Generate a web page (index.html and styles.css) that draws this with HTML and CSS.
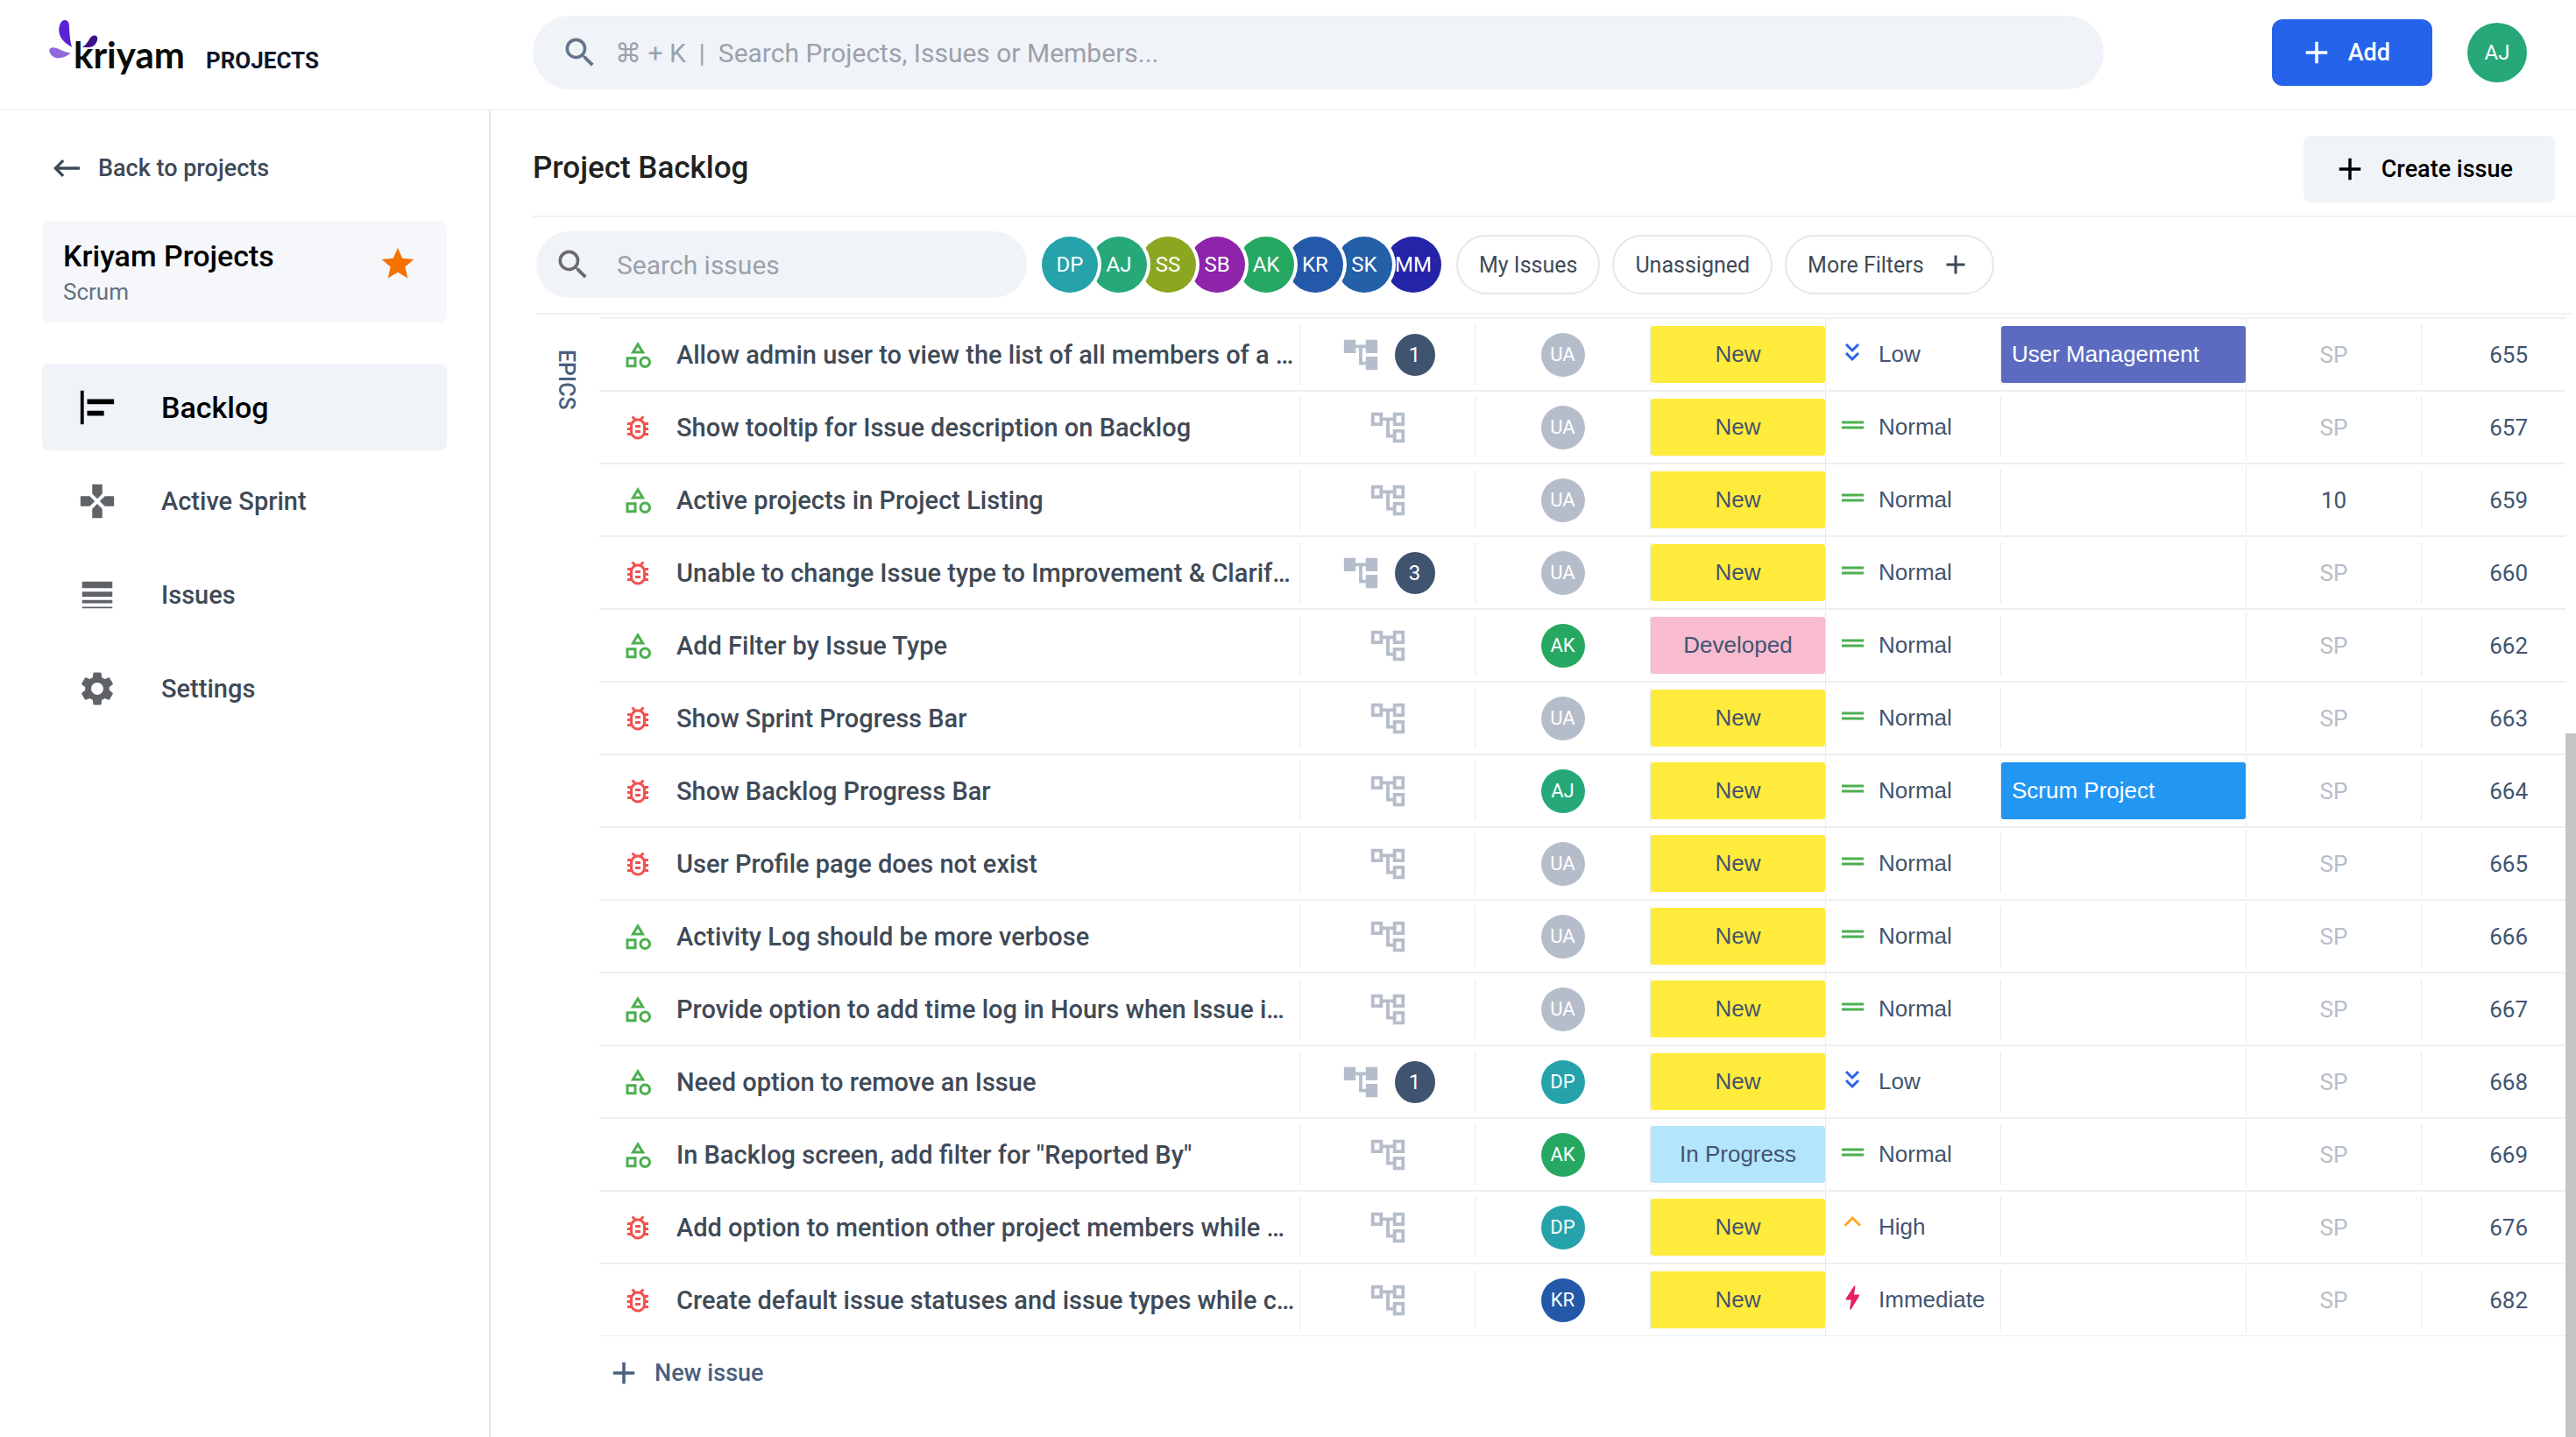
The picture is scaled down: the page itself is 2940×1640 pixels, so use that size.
FILE: index.html
```html
<!DOCTYPE html>
<html lang="en">
<head>
<meta charset="utf-8">
<meta name="viewport" content="width=device-width, initial-scale=1">
<title>Project Backlog - Kriyam Projects</title>
<link rel="stylesheet" href="styles.css">
</head>
<body>
<svg class="sprite" aria-hidden="true">
  <symbol id="search" viewBox="0 0 24 24"><path d="M15.5 14h-.79l-.28-.27A6.47 6.47 0 0 0 16 9.5 6.5 6.5 0 1 0 9.500 16c1.610 0 3.090-.59 4.230-1.570l.27.28v.79l5 4.990L20.490 19l-4.990-5zm-6 0C7.010 14 5 11.990 5 9.500S7.010 5 9.500 5 14 7.010 14 9.500 11.990 14 9.500 14z"/></symbol>
  <symbol id="plus" viewBox="0 0 24 24"><path d="M19 13h-6v6h-2v-6H5v-2h6V5h2v6h6v2z"/></symbol>
  <symbol id="back" viewBox="0 0 24 24"><path d="M21 11H6.830l3.580-3.590L9 6l-6 6 6 6 1.410-1.410L6.830 13H21z"/></symbol>
  <symbol id="star" viewBox="0 0 24 24"><path d="M12 17.270 18.180 21l-1.640-7.030L22 9.240l-7.190-.61L12 2 9.190 8.630 2 9.240l5.460 4.730L5.820 21z"/></symbol>
  <symbol id="backlog" viewBox="0 0 24 24"><path d="M4 22H2V2h2v20zM22 7H6v3h16V7zm-6 7H6v3h10v-3z"/></symbol>
  <symbol id="sprint" viewBox="0 0 24 24"><path d="M15 7.500V2H9v5.500l3 3 3-3zM7.500 9H2v6h5.500l3-3-3-3zM9 16.500V22h6v-5.500l-3-3-3 3zM16.500 9l-3 3 3 3H22V9h-5.500z"/></symbol>
  <symbol id="issues" viewBox="0 0 24 24"><path d="M3 17h18v-2H3v2zm0 3h18v-1H3v1zm0-7h18v-3H3v3zm0-9v4h18V4H3z"/></symbol>
  <symbol id="settings" viewBox="0 0 24 24"><path d="M19.140 12.940c.04-.3.06-.61.06-.94 0-.32-.02-.64-.07-.94l2.030-1.580c.18-.14.23-.41.12-.61l-1.920-3.320c-.12-.22-.37-.29-.59-.22l-2.390.96c-.5-.38-1.030-.7-1.620-.94l-.36-2.540c-.04-.24-.24-.41-.48-.41h-3.840c-.24 0-.43.17-.47.41l-.36 2.540c-.59.24-1.130.57-1.620.94l-2.390-.96c-.22-.08-.47 0-.59.22L2.740 8.870c-.12.21-.08.47.12.61l2.030 1.580c-.05.3-.09.63-.09.94s.02.64.07.94l-2.030 1.580c-.18.14-.23.41-.12.61l1.920 3.320c.12.22.37.29.59.22l2.390-.96c.5.38 1.030.7 1.620.94l.36 2.540c.05.24.24.41.48.41h3.840c.24 0 .44-.17.47-.41l.36-2.540c.59-.24 1.130-.56 1.620-.94l2.390.96c.22.08.47 0 .59-.22l1.920-3.320c.12-.22.07-.47-.12-.61l-2.010-1.580zM12 15.600c-1.980 0-3.600-1.620-3.600-3.600s1.620-3.600 3.600-3.600 3.600 1.620 3.600 3.600-1.620 3.600-3.600 3.600z"/></symbol>
  <symbol id="story" viewBox="0 0 24 24"><path d="m12 2-5.500 9h11L12 2zm0 3.840L13.930 9h-3.870L12 5.840zM17.500 13c-2.490 0-4.500 2.010-4.500 4.500s2.010 4.500 4.500 4.500 4.500-2.010 4.500-4.500-2.010-4.500-4.500-4.500zm0 7c-1.380 0-2.500-1.120-2.500-2.500s1.120-2.500 2.500-2.500 2.500 1.120 2.500 2.500-1.120 2.500-2.500 2.500zM3 21.500h8v-8H3v8zm2-6h4v4H5v-4z"/></symbol>
  <symbol id="bug" viewBox="0 0 24 24"><path d="M20 8h-2.810c-.45-.78-1.070-1.450-1.820-1.960L17 4.410 15.590 3l-2.170 2.170C12.960 5.060 12.490 5 12 5s-.96.06-1.410.17L8.410 3 7 4.410l1.620 1.630C7.880 6.550 7.260 7.220 6.810 8H4v2h2.090c-.05.33-.09.66-.09 1v1H4v2h2v1c0 .34.04.67.09 1H4v2h2.810c1.040 1.790 2.970 3 5.190 3s4.150-1.210 5.190-3H20v-2h-2.090c.05-.33.09-.66.09-1v-1h2v-2h-2v-1c0-.34-.04-.67-.09-1H20V8zm-4 4v3c0 .22-.03.47-.07.7l-.1.65-.37.65c-.72 1.240-2.040 2-3.460 2s-2.740-.77-3.460-2l-.37-.64-.1-.65C8.030 15.480 8 15.230 8 15v-4c0-.23.03-.48.07-.7l.1-.65.37-.65c.3-.52.72-.97 1.210-1.310l.57-.39.74-.18c.31-.08.63-.12.94-.12.32 0 .63.04.95.12l.68.16.61.42c.5.34.91.78 1.210 1.310l.38.65.1.65c.04.22.07.47.07.69v1zm-6 2h4v2h-4v-2zm0-4h4v2h-4v-2z"/></symbol>
  <symbol id="tree" viewBox="0 0 24 24"><path d="M22 11V3h-7v3H9V3H2v8h7V8h2v10h4v3h7v-8h-7v3h-2V8h2v3h7zM7 9H4V5h3v4zm10 6h3v4h-3v-4zm0-10h3v4h-3V5z"/></symbol>
  <symbol id="tree-filled" viewBox="0 0 24 24"><path d="M22 11V3h-7v3H9V3H2v8h7V8h2v10h4v3h7v-8h-7v3h-2V8h2v3h7z"/></symbol>
  <symbol id="low" viewBox="0 0 36 36"><path d="m11 9 7 7 7-7M11 19l7 7 7-7" fill="none" stroke="#2563eb" stroke-width="3"/></symbol>
  <symbol id="normal" viewBox="0 0 36 36"><path d="M6 13.500h25v3H6zM6 19.500h25v3H6z" fill="#4caf50"/></symbol>
  <symbol id="high" viewBox="0 0 36 36"><path d="m9.500 18.800 8.800-8.800 8.800 8.800" fill="none" stroke="#ffa726" stroke-width="3"/></symbol>
  <symbol id="immediate" viewBox="0 0 36 36"><path d="m19.800 5 1.800-.7L20 14.600h6V16l-9.500 15.500H15l1.700-11h-6V19z" fill="#e91e63"/></symbol>
</svg>

<header class="topbar">
  <div class="brand">
    <div class="logo">
      <svg class="leaves" viewBox="0 0 58 46" aria-hidden="true">
        <path fill="#5b21d6" d="M26.300 31.700C24 26 23.500 18 22.800 6 22.500 2 20 1 17.500 1c-3.500 0-6 5-6.200 11 0 8 4.700 14.500 15 19.700z"/>
        <path fill="#9168dc" d="M24.700 38.500C17 38 12 33 5 32.300 1.500 32 0 34 .3 36c.7 5 5.700 8.500 10.700 8.300 6-.3 10-2.800 13.700-5.800z"/>
        <path fill="#3b128c" d="M37.500 32c5.500-2.500 7-8 10.500-12 2-2 6-2.500 7 .5 1 4.500-2.500 9.500-6 10.800-4 1.200-8 .7-11.500.7z"/>
      </svg>
      <span class="wordmark">kriyam</span>
    </div>
    <span class="product">PROJECTS</span>
  </div>
  <label class="search search-global">
    <svg class="icon-md"><use href="#search"/></svg>
    <input type="text" aria-label="Search" placeholder="⌘ + K  |  Search Projects, Issues or Members...">
  </label>
  <div class="account">
    <button class="btn btn-primary" type="button"><svg class="icon-plus"><use href="#plus"/></svg>Add</button>
    <button class="avatar avatar-lg c-aj" type="button">AJ</button>
  </div>
</header>

<div class="layout">
  <aside class="sidebar">
    <a class="back" href="#"><svg class="icon-back"><use href="#back"/></svg>Back to projects</a>
    <div class="project">
      <div>
        <div class="project-name">Kriyam Projects</div>
        <div class="project-kind">Scrum</div>
      </div>
      <svg class="icon-md star"><use href="#star"/></svg>
    </div>
    <nav class="nav">
      <a class="nav-item active" href="#"><svg class="icon-lg"><use href="#backlog"/></svg>Backlog</a>
      <a class="nav-item" href="#"><svg class="icon-lg"><use href="#sprint"/></svg>Active Sprint</a>
      <a class="nav-item" href="#"><svg class="icon-lg"><use href="#issues"/></svg>Issues</a>
      <a class="nav-item" href="#"><svg class="icon-lg"><use href="#settings"/></svg>Settings</a>
    </nav>
  </aside>

  <main class="main">
    <div class="page-head">
      <h1>Project Backlog</h1>
      <button class="btn btn-soft" type="button"><svg class="icon-plus"><use href="#plus"/></svg>Create issue</button>
    </div>
    <div class="filters">
      <label class="search search-issues">
        <svg class="icon-md"><use href="#search"/></svg>
        <input type="text" aria-label="Search issues" placeholder="Search issues">
      </label>
      <div class="members">
        <button class="avatar c-dp" type="button">DP</button>
        <button class="avatar c-aj" type="button">AJ</button>
        <button class="avatar c-ss" type="button">SS</button>
        <button class="avatar c-sb" type="button">SB</button>
        <button class="avatar c-ak" type="button">AK</button>
        <button class="avatar c-kr" type="button">KR</button>
        <button class="avatar c-sk" type="button">SK</button>
        <button class="avatar c-mm" type="button">MM</button>
      </div>
      <div class="chips">
        <button class="chip" type="button">My Issues</button>
        <button class="chip" type="button">Unassigned</button>
        <button class="chip" type="button">More Filters<svg class="icon-sm"><use href="#plus"/></svg></button>
      </div>
    </div>

    <div class="board">
      <div class="epics">EPICS</div>
      <div class="list">
        <table class="issues">
          <colgroup><col><col class="w-200"><col class="w-200"><col class="w-200"><col class="w-200"><col class="w-280"><col class="w-200"><col class="w-id"></colgroup>
          <tbody>
            <tr>
              <td><div class="cell title"><svg class="icon-sm story"><use href="#story"/></svg><a href="#">Allow admin user to view the list of all members of a …</a></div></td>
              <td><div class="cell center tree"><svg class="icon-lg"><use href="#tree-filled"/></svg><span class="count">1</span></div></td>
              <td><div class="cell center"><span class="avatar avatar-sm c-ua">UA</span></div></td>
              <td><div class="cell full"><span class="tag s-new">New</span></div></td>
              <td><div class="cell priority"><svg class="icon-sm"><use href="#low"/></svg>Low</div></td>
              <td><div class="cell full"><span class="tag epic e-user">User Management</span></div></td>
              <td><div class="cell center points">SP</div></td>
              <td class="id">655</td>
            </tr>
            <tr>
              <td><div class="cell title"><svg class="icon-sm bug"><use href="#bug"/></svg><a href="#">Show tooltip for Issue description on Backlog</a></div></td>
              <td><div class="cell center tree"><svg class="icon-lg"><use href="#tree"/></svg></div></td>
              <td><div class="cell center"><span class="avatar avatar-sm c-ua">UA</span></div></td>
              <td><div class="cell full"><span class="tag s-new">New</span></div></td>
              <td><div class="cell priority"><svg class="icon-sm"><use href="#normal"/></svg>Normal</div></td>
              <td><div class="cell tall"></div></td>
              <td><div class="cell center points">SP</div></td>
              <td class="id">657</td>
            </tr>
            <tr>
              <td><div class="cell title"><svg class="icon-sm story"><use href="#story"/></svg><a href="#">Active projects in Project Listing</a></div></td>
              <td><div class="cell center tree"><svg class="icon-lg"><use href="#tree"/></svg></div></td>
              <td><div class="cell center"><span class="avatar avatar-sm c-ua">UA</span></div></td>
              <td><div class="cell full"><span class="tag s-new">New</span></div></td>
              <td><div class="cell priority"><svg class="icon-sm"><use href="#normal"/></svg>Normal</div></td>
              <td><div class="cell tall"></div></td>
              <td><div class="cell center points set">10</div></td>
              <td class="id">659</td>
            </tr>
            <tr>
              <td><div class="cell title"><svg class="icon-sm bug"><use href="#bug"/></svg><a href="#">Unable to change Issue type to Improvement &amp; Clarif…</a></div></td>
              <td><div class="cell center tree"><svg class="icon-lg"><use href="#tree-filled"/></svg><span class="count">3</span></div></td>
              <td><div class="cell center"><span class="avatar avatar-sm c-ua">UA</span></div></td>
              <td><div class="cell full"><span class="tag s-new">New</span></div></td>
              <td><div class="cell priority"><svg class="icon-sm"><use href="#normal"/></svg>Normal</div></td>
              <td><div class="cell tall"></div></td>
              <td><div class="cell center points">SP</div></td>
              <td class="id">660</td>
            </tr>
            <tr>
              <td><div class="cell title"><svg class="icon-sm story"><use href="#story"/></svg><a href="#">Add Filter by Issue Type</a></div></td>
              <td><div class="cell center tree"><svg class="icon-lg"><use href="#tree"/></svg></div></td>
              <td><div class="cell center"><span class="avatar avatar-sm c-ak">AK</span></div></td>
              <td><div class="cell full"><span class="tag s-developed">Developed</span></div></td>
              <td><div class="cell priority"><svg class="icon-sm"><use href="#normal"/></svg>Normal</div></td>
              <td><div class="cell tall"></div></td>
              <td><div class="cell center points">SP</div></td>
              <td class="id">662</td>
            </tr>
            <tr>
              <td><div class="cell title"><svg class="icon-sm bug"><use href="#bug"/></svg><a href="#">Show Sprint Progress Bar</a></div></td>
              <td><div class="cell center tree"><svg class="icon-lg"><use href="#tree"/></svg></div></td>
              <td><div class="cell center"><span class="avatar avatar-sm c-ua">UA</span></div></td>
              <td><div class="cell full"><span class="tag s-new">New</span></div></td>
              <td><div class="cell priority"><svg class="icon-sm"><use href="#normal"/></svg>Normal</div></td>
              <td><div class="cell tall"></div></td>
              <td><div class="cell center points">SP</div></td>
              <td class="id">663</td>
            </tr>
            <tr>
              <td><div class="cell title"><svg class="icon-sm bug"><use href="#bug"/></svg><a href="#">Show Backlog Progress Bar</a></div></td>
              <td><div class="cell center tree"><svg class="icon-lg"><use href="#tree"/></svg></div></td>
              <td><div class="cell center"><span class="avatar avatar-sm c-aj">AJ</span></div></td>
              <td><div class="cell full"><span class="tag s-new">New</span></div></td>
              <td><div class="cell priority"><svg class="icon-sm"><use href="#normal"/></svg>Normal</div></td>
              <td><div class="cell full"><span class="tag epic e-scrum">Scrum Project</span></div></td>
              <td><div class="cell center points">SP</div></td>
              <td class="id">664</td>
            </tr>
            <tr>
              <td><div class="cell title"><svg class="icon-sm bug"><use href="#bug"/></svg><a href="#">User Profile page does not exist</a></div></td>
              <td><div class="cell center tree"><svg class="icon-lg"><use href="#tree"/></svg></div></td>
              <td><div class="cell center"><span class="avatar avatar-sm c-ua">UA</span></div></td>
              <td><div class="cell full"><span class="tag s-new">New</span></div></td>
              <td><div class="cell priority"><svg class="icon-sm"><use href="#normal"/></svg>Normal</div></td>
              <td><div class="cell tall"></div></td>
              <td><div class="cell center points">SP</div></td>
              <td class="id">665</td>
            </tr>
            <tr>
              <td><div class="cell title"><svg class="icon-sm story"><use href="#story"/></svg><a href="#">Activity Log should be more verbose</a></div></td>
              <td><div class="cell center tree"><svg class="icon-lg"><use href="#tree"/></svg></div></td>
              <td><div class="cell center"><span class="avatar avatar-sm c-ua">UA</span></div></td>
              <td><div class="cell full"><span class="tag s-new">New</span></div></td>
              <td><div class="cell priority"><svg class="icon-sm"><use href="#normal"/></svg>Normal</div></td>
              <td><div class="cell tall"></div></td>
              <td><div class="cell center points">SP</div></td>
              <td class="id">666</td>
            </tr>
            <tr>
              <td><div class="cell title"><svg class="icon-sm story"><use href="#story"/></svg><a href="#">Provide option to add time log in Hours when Issue i…</a></div></td>
              <td><div class="cell center tree"><svg class="icon-lg"><use href="#tree"/></svg></div></td>
              <td><div class="cell center"><span class="avatar avatar-sm c-ua">UA</span></div></td>
              <td><div class="cell full"><span class="tag s-new">New</span></div></td>
              <td><div class="cell priority"><svg class="icon-sm"><use href="#normal"/></svg>Normal</div></td>
              <td><div class="cell tall"></div></td>
              <td><div class="cell center points">SP</div></td>
              <td class="id">667</td>
            </tr>
            <tr>
              <td><div class="cell title"><svg class="icon-sm story"><use href="#story"/></svg><a href="#">Need option to remove an Issue</a></div></td>
              <td><div class="cell center tree"><svg class="icon-lg"><use href="#tree-filled"/></svg><span class="count">1</span></div></td>
              <td><div class="cell center"><span class="avatar avatar-sm c-dp">DP</span></div></td>
              <td><div class="cell full"><span class="tag s-new">New</span></div></td>
              <td><div class="cell priority"><svg class="icon-sm"><use href="#low"/></svg>Low</div></td>
              <td><div class="cell tall"></div></td>
              <td><div class="cell center points">SP</div></td>
              <td class="id">668</td>
            </tr>
            <tr>
              <td><div class="cell title"><svg class="icon-sm story"><use href="#story"/></svg><a href="#">In Backlog screen, add filter for "Reported By"</a></div></td>
              <td><div class="cell center tree"><svg class="icon-lg"><use href="#tree"/></svg></div></td>
              <td><div class="cell center"><span class="avatar avatar-sm c-ak">AK</span></div></td>
              <td><div class="cell full"><span class="tag s-progress">In Progress</span></div></td>
              <td><div class="cell priority"><svg class="icon-sm"><use href="#normal"/></svg>Normal</div></td>
              <td><div class="cell tall"></div></td>
              <td><div class="cell center points">SP</div></td>
              <td class="id">669</td>
            </tr>
            <tr>
              <td><div class="cell title"><svg class="icon-sm bug"><use href="#bug"/></svg><a href="#">Add option to mention other project members while …</a></div></td>
              <td><div class="cell center tree"><svg class="icon-lg"><use href="#tree"/></svg></div></td>
              <td><div class="cell center"><span class="avatar avatar-sm c-dp">DP</span></div></td>
              <td><div class="cell full"><span class="tag s-new">New</span></div></td>
              <td><div class="cell priority"><svg class="icon-sm"><use href="#high"/></svg>High</div></td>
              <td><div class="cell tall"></div></td>
              <td><div class="cell center points">SP</div></td>
              <td class="id">676</td>
            </tr>
            <tr>
              <td><div class="cell title"><svg class="icon-sm bug"><use href="#bug"/></svg><a href="#">Create default issue statuses and issue types while c…</a></div></td>
              <td><div class="cell center tree"><svg class="icon-lg"><use href="#tree"/></svg></div></td>
              <td><div class="cell center"><span class="avatar avatar-sm c-kr">KR</span></div></td>
              <td><div class="cell full"><span class="tag s-new">New</span></div></td>
              <td><div class="cell priority"><svg class="icon-sm"><use href="#immediate"/></svg>Immediate</div></td>
              <td><div class="cell tall"></div></td>
              <td><div class="cell center points">SP</div></td>
              <td class="id">682</td>
            </tr>
          </tbody>
        </table>
        <button class="new-issue" type="button"><svg class="icon-plus"><use href="#plus"/></svg>New issue</button>
      </div>
      <div class="scroll-thumb"></div>
    </div>
  </main>
</div>
</body>
</html>
```
FILE: styles.css
```css
* { box-sizing: border-box; }

body {
  margin: 0;
  min-height: 100vh;
  display: flex;
  flex-direction: column;
  font-family: Roboto, "DejaVu Sans", sans-serif;
  font-size: 26px;
  color: #3f4a57;
  background: #fff;
}

button { font: inherit; border: 0; padding: 0; cursor: pointer; }
a { color: inherit; text-decoration: none; }
svg { display: block; flex: none; fill: currentColor; }
.sprite { position: absolute; width: 0; height: 0; }

.icon-sm { width: 36px; height: 36px; }
.icon-plus { width: 42px; height: 42px; }
.icon-back { width: 40px; height: 40px; }
.icon-md { width: 44px; height: 44px; }
.icon-lg { width: 46px; height: 46px; }

/* Top bar */
.topbar {
  display: flex;
  align-items: center;
  height: 126px;
  padding: 0 56px 4px 56px;
  border-bottom: 2px solid #f0f4f9;
}
.brand {
  display: flex;
  align-items: baseline;
  gap: 24px;
  width: 552px;
  padding-top: 4px;
}
.logo { position: relative; padding-left: 28px; }
.leaves { position: absolute; left: 0; top: -16px; width: 58px; height: 46px; }
.wordmark {
  font-family: Lato, sans-serif;
  font-size: 42px;
  line-height: 48px;
  font-weight: 700;
  color: #0b0b0b;
}
.product { font-weight: 700; color: #0f172a; }

.search {
  display: flex;
  align-items: center;
  border-radius: 42px;
  background: #f0f4f9;
}
.search input {
  flex: 1;
  min-width: 0;
  border: 0;
  padding: 0;
  outline: 0;
  background: transparent;
  font: inherit;
  color: #1f2937;
}
.search input::placeholder { color: #9ca1aa; }
.search-global { flex: 1; height: 84px; padding: 0 32px; gap: 18px; font-size: 30px; color: #64748b; }
.search-issues { width: 560px; height: 76px; padding: 0 20px; gap: 28px; font-size: 30px; color: #6b6b6b; }

.account { display: flex; align-items: center; gap: 40px; margin-left: 192px; }

.btn {
  display: flex;
  align-items: center;
  gap: 15px;
  height: 76px;
  font-size: 27px;
  font-weight: 500;
}
.btn-primary { padding: 0 48px 0 30px; border-radius: 12px; background: #2563eb; color: #fff; }
.btn-soft { padding: 0 48px 0 32px; border-radius: 8px; background: #f0f4f9; color: #000; }

.avatar {
  display: flex;
  align-items: center;
  justify-content: center;
  width: 64px;
  height: 64px;
  border-radius: 50%;
  font-size: 24px;
  color: #fff;
}
.avatar-lg { width: 68px; height: 68px; }
.avatar-sm { width: 50px; height: 50px; font-size: 22px; }
.c-dp { background: #25a2aa; }
.c-aj { background: #26a879; }
.c-ss { background: #8ba722; }
.c-sb { background: #8e24aa; }
.c-ak { background: #26a862; }
.c-kr { background: #2459a9; }
.c-sk { background: #2360a8; }
.c-mm { background: #2424a8; }
.c-ua { background: #b6bdca; }

/* Sidebar */
.layout { display: flex; flex: 1; }
.sidebar {
  flex: none;
  width: 560px;
  padding: 46px 48px 0;
  border-right: 2px solid #e5e7eb;
}
.back {
  display: flex;
  align-items: center;
  gap: 16px;
  height: 40px;
  padding-left: 8px;
  font-size: 27px;
  font-weight: 500;
}
.project {
  display: flex;
  align-items: flex-start;
  justify-content: space-between;
  height: 116px;
  margin-top: 40px;
  padding: 20px 34px 0 24px;
  border-radius: 8px;
  background: #f5f7fb;
}
.project-name { font-size: 34px; line-height: 40px; font-weight: 500; color: #000; }
.project-kind { font-size: 26px; line-height: 42px; color: #64707d; }
.star { margin-top: 7px; color: #f57100; }
.nav { display: flex; flex-direction: column; gap: 8px; margin-top: 47px; }
.nav-item {
  display: flex;
  align-items: center;
  gap: 50px;
  height: 99px;
  padding-left: 40px;
  border-radius: 8px;
  font-size: 29px;
  font-weight: 500;
}
.nav-item svg { color: #5f6368; }
.nav-item.active { background: #f0f4f9; color: #000; font-size: 34px; }
.nav-item.active svg { color: #000; }

/* Main column */
.main { flex: 1; min-width: 0; display: flex; flex-direction: column; padding-left: 48px; }
.page-head {
  display: flex;
  align-items: center;
  justify-content: space-between;
  padding: 29px 24px 15px 0;
  border-bottom: 2px solid #f1f2f4;
}
h1 { margin: 0; padding-bottom: 2px; font-size: 35px; line-height: 40px; font-weight: 500; color: #212121; }
.filters {
  display: flex;
  align-items: center;
  gap: 17px;
  margin: 0 4px;
  padding: 16px 0 17px;
  border-bottom: 2px solid #f1f2f4;
}
.members { display: flex; flex-direction: row; isolation: isolate; }
.members .avatar { position: relative; box-shadow: 0 0 0 4px #fff; }
.members .avatar + .avatar { margin-left: -8px; }
.members .avatar:nth-child(1) { z-index: 8; }
.members .avatar:nth-child(2) { z-index: 7; }
.members .avatar:nth-child(3) { z-index: 6; }
.members .avatar:nth-child(4) { z-index: 5; }
.members .avatar:nth-child(5) { z-index: 4; }
.members .avatar:nth-child(6) { z-index: 3; }
.members .avatar:nth-child(7) { z-index: 2; }
.chips { display: flex; gap: 14px; }
.chip {
  display: flex;
  align-items: center;
  gap: 18px;
  height: 68px;
  padding: 0 24px;
  border: 2px solid #e5e7eb;
  border-radius: 34px;
  background: #fff;
  font-size: 25px;
  color: #3f4a57;
}

/* Issue list */
.board { position: relative; flex: 1; display: flex; padding: 3px 12px 0 4px; }
.epics {
  flex: none;
  width: 72px;
  padding: 37px 22px 0 0;
  writing-mode: vertical-rl;
  line-height: 32px;
  font-size: 25px;
  font-weight: 500;
  color: #4b5f80;
}
.list { flex: 1; min-width: 0; }
.issues {
  width: 100%;
  table-layout: fixed;
  border-spacing: 0;
  border-bottom: 1px solid #eceef0;
  color: #43546f;
}
.w-200 { width: 200px; }
.w-280 { width: 280px; }
.w-id { width: 164px; }
.issues td { height: 83px; padding: 0; border-top: 2px solid #eeeff1; vertical-align: middle; }
.cell {
  display: flex;
  align-items: center;
  height: 69px;
  border-right: 1px solid #e8eaed;
}
.tall { height: 77px; }
.full { height: 81px; }
.center { justify-content: center; }
.title { gap: 26px; padding-left: 26px; font-size: 29px; font-weight: 500; color: #3f4a57; }
.title a { white-space: nowrap; }
.story { color: #4caf50; }
.bug { color: #ef5350; }
.tree { gap: 16px; }
.tree svg { color: #b6bdca; }
.count {
  display: flex;
  align-items: center;
  justify-content: center;
  width: 46px;
  height: 48px;
  border-radius: 50%;
  background: #40536f;
  font-size: 24px;
  color: #fff;
}
.tag {
  flex: 1;
  border-radius: 3px;
  font-family: "Liberation Sans", sans-serif;
  line-height: 65px;
  text-align: center;
}
.s-new { background: #ffeb3b; }
.s-developed { background: #f8bbd0; }
.s-progress { background: #b3e5fc; }
.epic { padding-left: 12px; text-align: left; color: #fff; }
.e-user { background: #5c6bc0; }
.e-scrum { background: #2196f3; }
.priority { gap: 12px; padding-left: 12px; font-family: "Liberation Sans", sans-serif; }
.priority svg { margin-bottom: 5px; }
.points { color: #b6bdca; }
.points.set { color: #40536f; }
.issues .id { padding-right: 43px; text-align: right; }

.new-issue {
  display: flex;
  align-items: center;
  gap: 14px;
  margin: 21px 0 0 7px;
  background: none;
  font-size: 27px;
  font-weight: 500;
  color: #4b5f80;
}

.scroll-thumb {
  position: absolute;
  right: 0;
  top: 478px;
  bottom: 0;
  width: 12px;
  background: #c4c4c4;
}
```
